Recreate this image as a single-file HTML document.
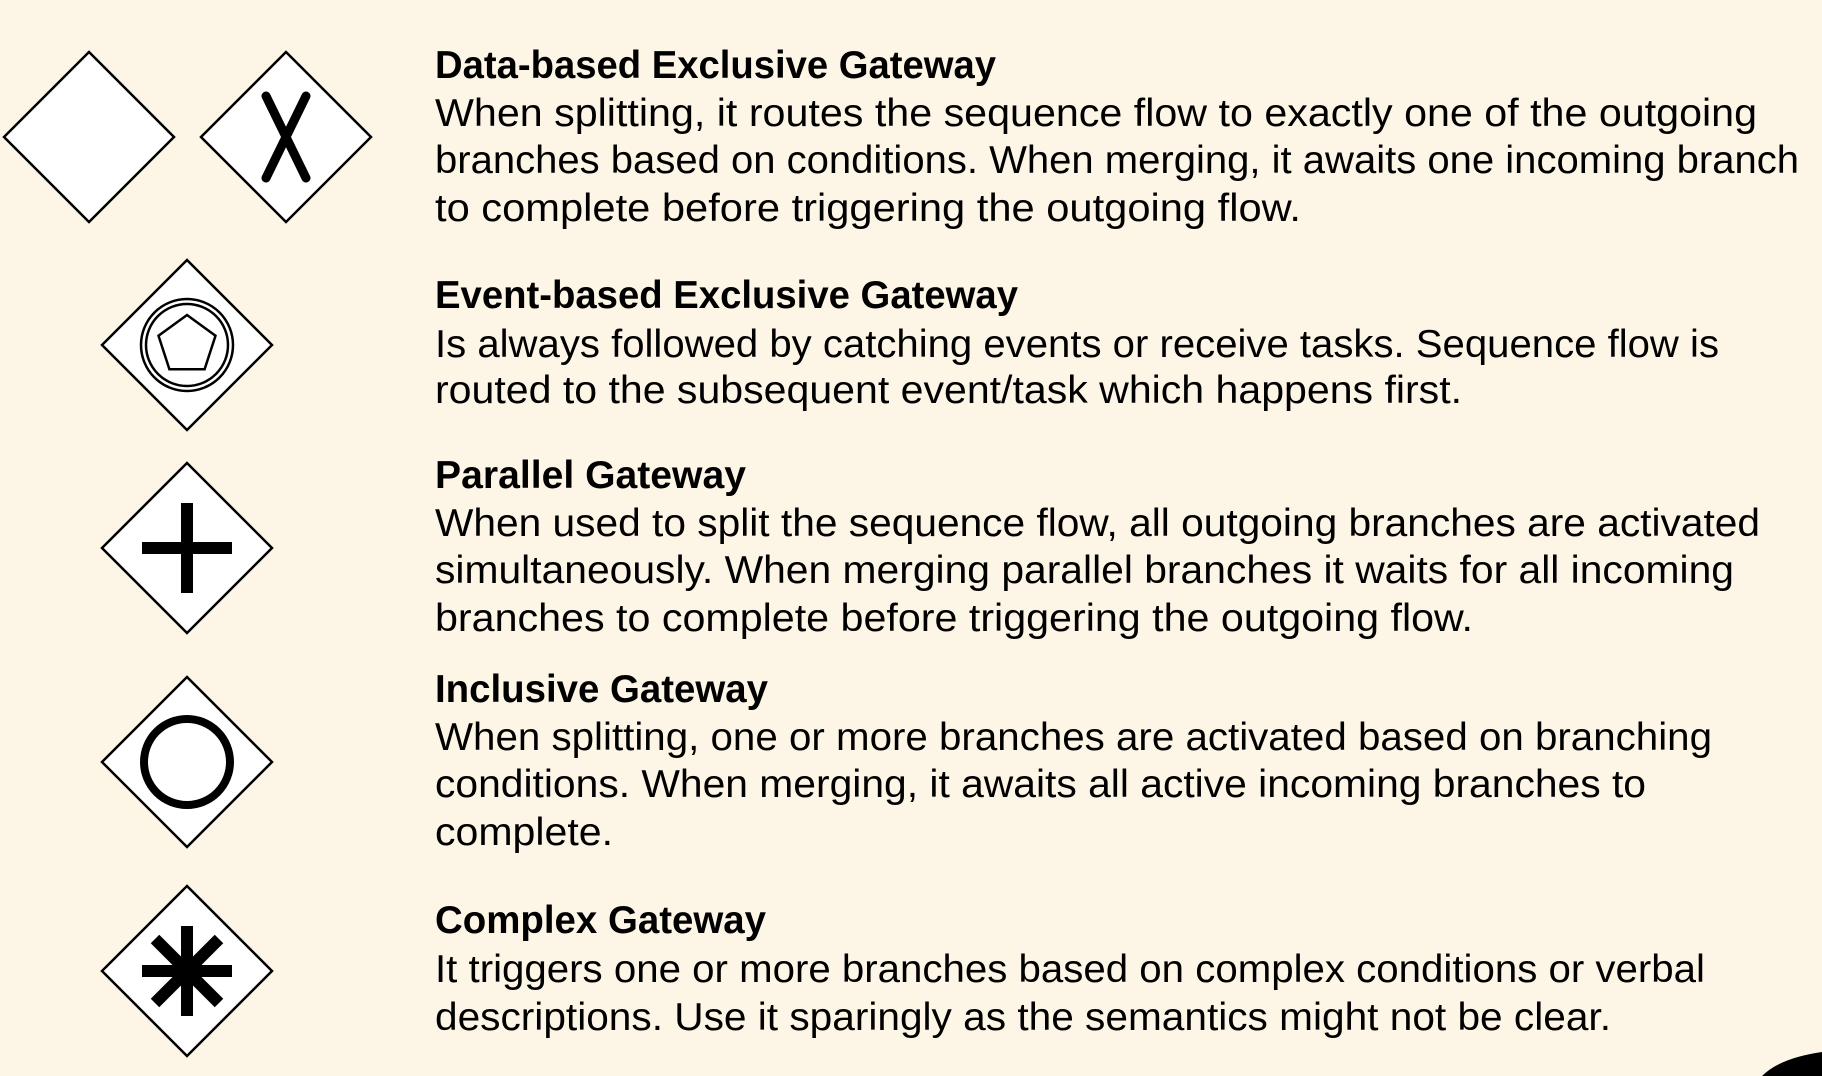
<!DOCTYPE html>
<html><head><meta charset="utf-8"><style>
html,body{margin:0;padding:0;background:#fdf5e6;overflow:hidden;}
svg{display:block}
text{font-family:"Liberation Sans",sans-serif;font-size:39px;fill:#000}
.t{font-weight:bold}
</style></head><body>
<svg width="1822" height="1076" viewBox="0 0 1822 1076" xmlns="http://www.w3.org/2000/svg">
<rect width="1822" height="1076" fill="#fdf5e6"/>
<g fill="#fff" stroke="#000" stroke-width="2.5">
<polygon points="89,52 174,137 89,222 4,137"/>
<polygon points="286,52 371,137 286,222 201,137"/>
<polygon points="187,260 272,345 187,430 102,345"/>
<polygon points="187,463 272,548 187,633 102,548"/>
<polygon points="187,677 272,762 187,847 102,762"/>
<polygon points="187,886 272,971 187,1056 102,971"/>
</g>
<g stroke="#000" stroke-width="9" stroke-linecap="round"><line x1="266" y1="96" x2="306" y2="178"/><line x1="306" y1="96" x2="266" y2="178"/></g>
<g fill="none" stroke="#000" stroke-width="2.5"><circle cx="187" cy="345" r="46"/><circle cx="187" cy="345" r="41"/>
<polygon points="187,315 215.5,335.7 204.6,369.3 169.4,369.3 158.5,335.7"/></g>
<g stroke="#000" stroke-width="12"><line x1="142" y1="548" x2="232" y2="548"/><line x1="187" y1="503" x2="187" y2="593"/></g>
<circle cx="187" cy="762" r="43" fill="none" stroke="#000" stroke-width="8"/>
<g stroke="#000" stroke-width="12"><line x1="142" y1="971" x2="232" y2="971"/><line x1="187" y1="926" x2="187" y2="1016"/><line x1="155" y1="939" x2="219" y2="1003"/><line x1="219" y1="939" x2="155" y2="1003"/></g>
<path d="M1762 1076 Q1780 1058 1822 1052 L1822 1076 Z" fill="#000"/>
<text class="t" x="435" y="78" textLength="561" lengthAdjust="spacingAndGlyphs">Data-based Exclusive Gateway</text>
<text x="435" y="126" textLength="1322" lengthAdjust="spacingAndGlyphs">When splitting, it routes the sequence flow to exactly one of the outgoing</text>
<text x="435" y="173" textLength="1364" lengthAdjust="spacingAndGlyphs">branches based on conditions. When merging, it awaits one incoming branch</text>
<text x="435" y="221" textLength="866" lengthAdjust="spacingAndGlyphs">to complete before triggering the outgoing flow.</text>
<text class="t" x="435" y="308" textLength="583" lengthAdjust="spacingAndGlyphs">Event-based Exclusive Gateway</text>
<text x="435" y="357" textLength="1284" lengthAdjust="spacingAndGlyphs">Is always followed by catching events or receive tasks. Sequence flow is</text>
<text x="435" y="403" textLength="1027" lengthAdjust="spacingAndGlyphs">routed to the subsequent event/task which happens first.</text>
<text class="t" x="435" y="488" textLength="311" lengthAdjust="spacingAndGlyphs">Parallel Gateway</text>
<text x="435" y="536" textLength="1325" lengthAdjust="spacingAndGlyphs">When used to split the sequence flow, all outgoing branches are activated</text>
<text x="435" y="583" textLength="1299" lengthAdjust="spacingAndGlyphs">simultaneously. When merging parallel branches it waits for all incoming</text>
<text x="435" y="631" textLength="1038" lengthAdjust="spacingAndGlyphs">branches to complete before triggering the outgoing flow.</text>
<text class="t" x="435" y="702" textLength="333" lengthAdjust="spacingAndGlyphs">Inclusive Gateway</text>
<text x="435" y="750" textLength="1277" lengthAdjust="spacingAndGlyphs">When splitting, one or more branches are activated based on branching</text>
<text x="435" y="797" textLength="1211" lengthAdjust="spacingAndGlyphs">conditions. When merging, it awaits all active incoming branches to</text>
<text x="435" y="845" textLength="178" lengthAdjust="spacingAndGlyphs">complete.</text>
<text class="t" x="435" y="933" textLength="331" lengthAdjust="spacingAndGlyphs">Complex Gateway</text>
<text x="435" y="982" textLength="1270" lengthAdjust="spacingAndGlyphs">It triggers one or more branches based on complex conditions or verbal</text>
<text x="435" y="1030" textLength="1176" lengthAdjust="spacingAndGlyphs">descriptions. Use it sparingly as the semantics might not be clear.</text>
</svg>
</body></html>
